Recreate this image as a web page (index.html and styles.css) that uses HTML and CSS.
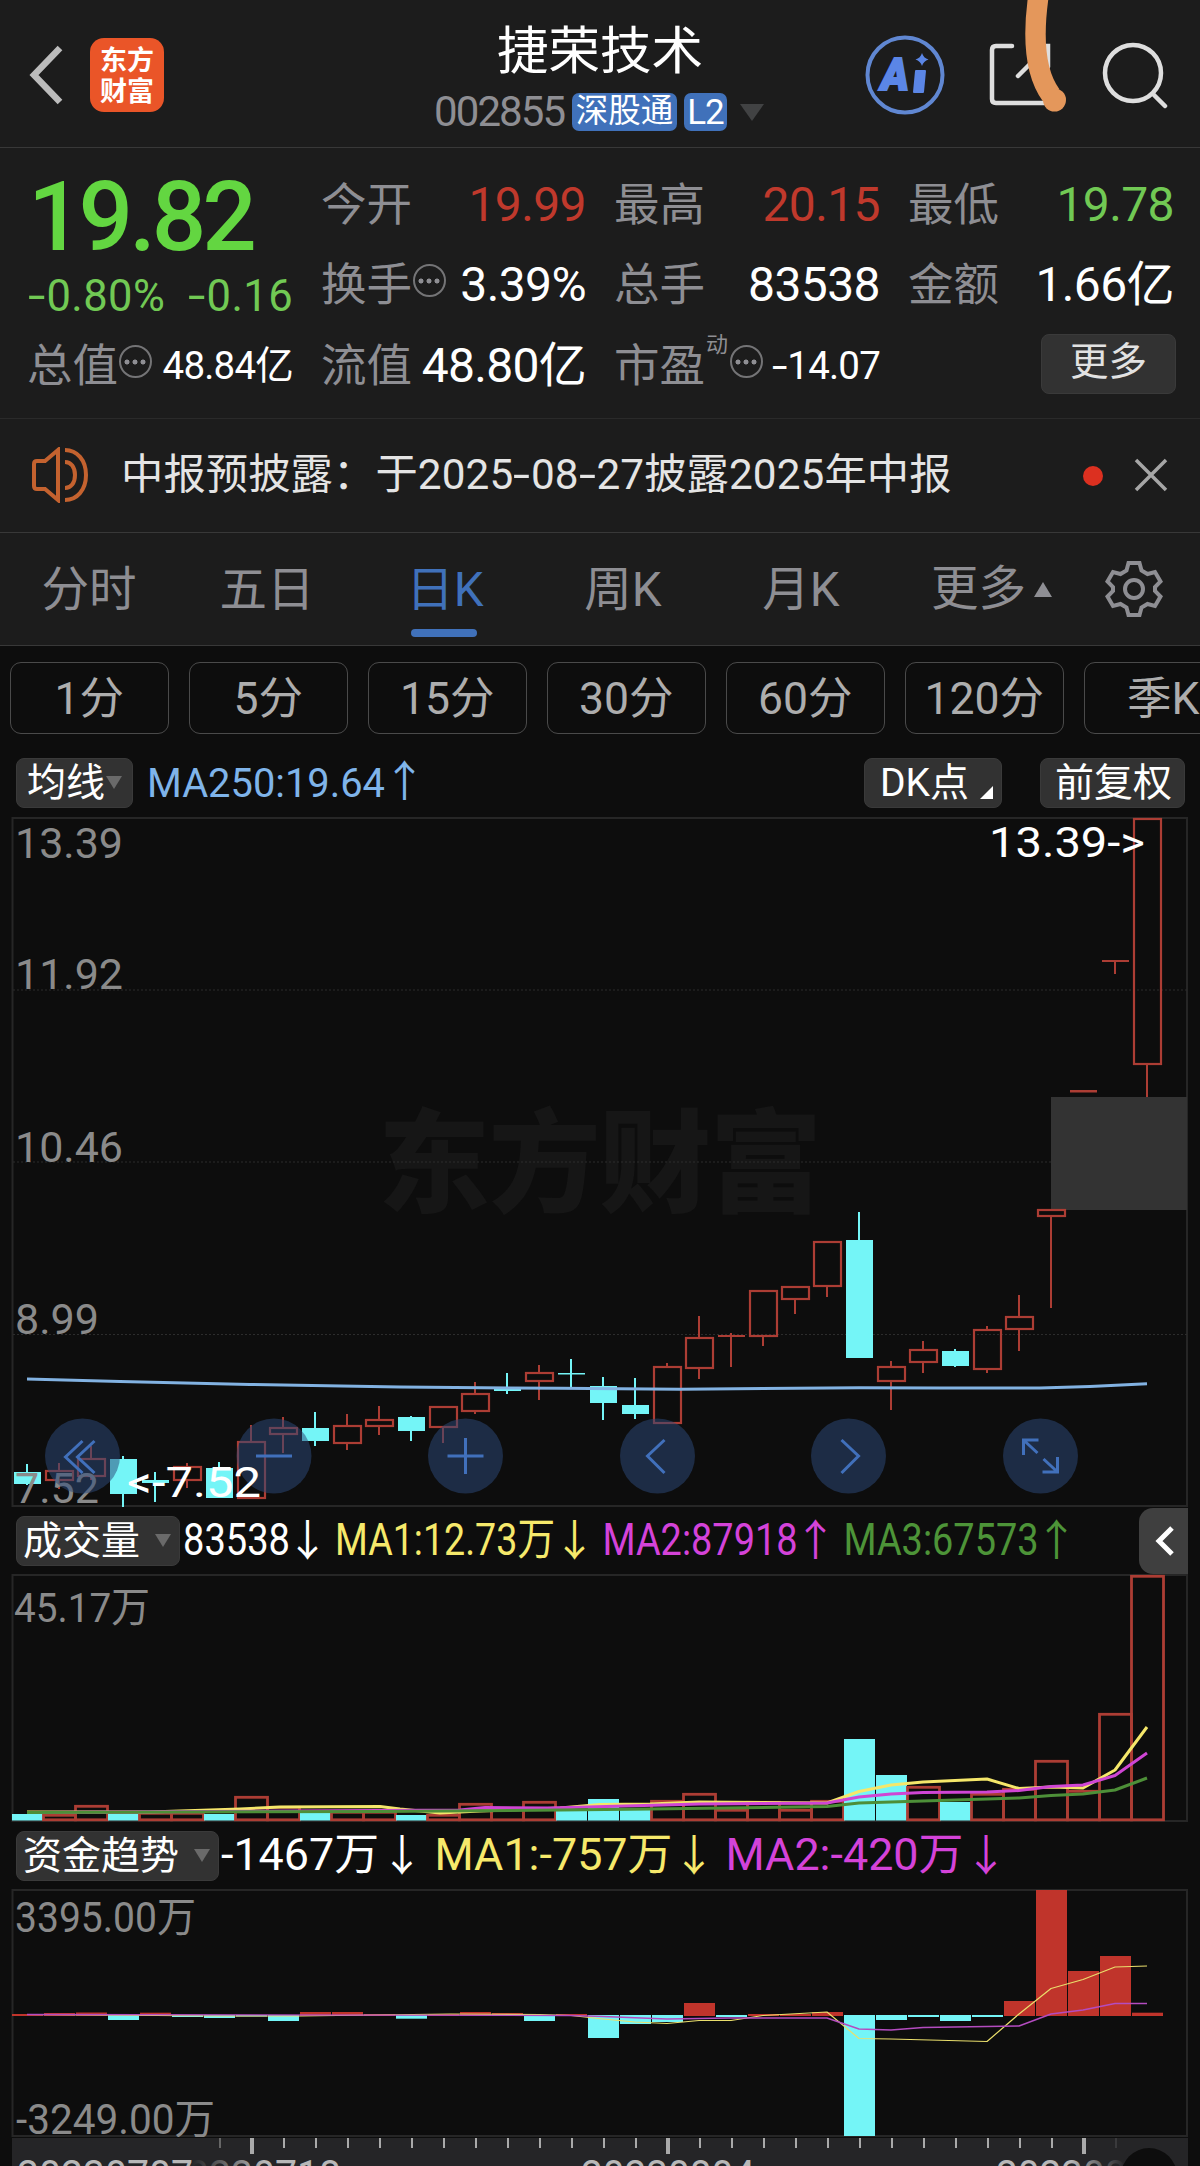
FILE: index.html
```html
<!DOCTYPE html>
<html lang="zh-CN">
<head>
<meta charset="utf-8">
<title>捷荣技术 002855</title>
<link rel="stylesheet" href="styles.css">
</head>
<body>
<div class="app">
  <header class="topbar">
    <div class="nav-left">
      <svg class="back" width="38" height="62" viewBox="0 0 38 62"><path d="M33 4 7 31l26 27" fill="none" stroke="#bcbcbc" stroke-width="6.5"/></svg>
      <div class="logo"><span>东方</span><span>财富</span></div>
    </div>
    <div class="stock">
      <h1>捷荣技术</h1>
      <div class="code-row">
        <span class="code">002855</span>
        <span class="tag">深股通</span>
        <span class="tag tag-l2">L2</span>
        <svg class="caret" width="24" height="17" viewBox="0 0 24 17"><path d="M0 0h24L12 17z" fill="#414243"/></svg>
      </div>
    </div>
    <div class="nav-right">
      <svg class="i-ai" width="82" height="82" viewBox="0 0 82 82">
        <circle cx="41" cy="41" r="37.5" fill="none" stroke="#6087d2" stroke-width="4"/>
        <text x="17" y="56" font-size="45" textLength="28" lengthAdjust="spacingAndGlyphs" class="ai">A</text>
        <path d="M52 37h9l-2 21h-9z" fill="#5b86e6" stroke="#5b86e6" stroke-width="2" stroke-linejoin="round"/>
        <path d="M58 19q1.500 5 6.500 6.500-5 1.500-6.500 6.500-1.500-5-6.500-6.500 5-1.500 6.500-6.500z" fill="#5b86e6"/>
      </svg>
      <svg class="i-share" width="66" height="66" viewBox="0 0 66 66" fill="none" stroke="#dedede" stroke-width="4.500" stroke-linecap="round"><path d="M24 4H8q-4 0-4 4v49q0 4 4 4h48q4 0 4-4V46M45 4h15v21M59 5 30 34"/></svg>
      <svg class="i-search" width="68" height="68" viewBox="0 0 68 68" fill="none" stroke="#dedede" stroke-width="4.500" stroke-linecap="round"><circle cx="32" cy="32" r="28"/><path d="m53 54 11 11"/></svg>
    </div>
    <svg class="marker" width="60" height="120" viewBox="1020 0 60 120"><path d="M1039-8c-5 33-7 77 12 103" fill="none" stroke="#e4975b" stroke-width="20.500"/><circle cx="1054.500" cy="100" r="11.500" fill="#e4975b"/></svg>
  </header>

  <section class="quote">
    <div class="last">
      <div class="price">19.82</div>
      <div class="change"><span><span class="hy">-</span>0.80%</span><span><span class="hy">-</span>0.16</span></div>
    </div>
    <div class="cell"><label>今开</label><b class="red">19.99</b></div>
    <div class="cell"><label>最高</label><b class="red">20.15</b></div>
    <div class="cell"><label>最低</label><b class="green">19.78</b></div>
    <div class="cell"><label>换手</label><i class="dots"></i><b>3.39%</b></div>
    <div class="cell"><label>总手</label><b>83538</b></div>
    <div class="cell"><label>金额</label><b>1.66亿</b></div>
    <div class="cell"><label>总值</label><i class="dots"></i><b class="small">48.84亿</b></div>
    <div class="cell"><label>流值</label><b class="mid">48.80亿</b></div>
    <div class="cell"><label>市盈</label><sup>动</sup><i class="dots"></i><b class="small"><span class="hy">-</span>14.07</b></div>
    <div class="cell cell-more"><button class="more">更多</button></div>
  </section>

  <section class="notice">
    <svg width="58" height="56" viewBox="0 0 58 56" fill="none" stroke="#c4622f" stroke-width="4"><path d="M27 3 14 14H6q-3 0-3 3v22q0 3 3 3h8l13 11zM34 3c12 0 21 10 21 25s-9 25-21 25M34 15c6 0 10 5 10 13s-4 13-10 13"/></svg>
    <p>中报预披露：于2025<span class="hy">-</span>08<span class="hy">-</span>27披露2025年中报</p>
    <i class="dot"></i>
    <svg width="34" height="34" viewBox="0 0 34 34"><path d="m2 2 30 30M32 2 2 32" stroke="#a6a6a6" stroke-width="3.500"/></svg>
  </section>

  <nav class="tabs">
    <a>分时</a><a>五日</a><a class="on">日K</a><a>周K</a><a>月K</a>
    <a class="tab-more">更多<svg width="18" height="15" viewBox="0 0 18 15"><path d="M9 0l9 15H0z" fill="#8e8e93"/></svg></a>
    <svg class="gear" width="58" height="58" viewBox="-29 -29 58 58" fill="none" stroke="#8e8e93" stroke-width="4"><path d="M-5.500-26h11l2 7.500 6 3.500 7.500-2 5.500 9.500-5.500 5.500v4l5.500 5.500-5.500 9.500-7.500-2-6 3.500-2 7.500h-11l-2-7.500-6-3.500-7.500 2-5.500-9.500 5.500-5.500v-4l-5.500-5.500 5.500-9.500 7.500 2 6-3.500z"/><circle r="9"/></svg>
  </nav>

  <div class="periods"><span>1分</span><span>5分</span><span>15分</span><span>30分</span><span>60分</span><span>120分</span><span>季K</span></div>

  <div class="indicator">
    <span class="chip chip-ma">均线<svg width="16" height="13" viewBox="0 0 16 13"><path d="M0 0h16L8 13z" fill="#6a6a6a"/></svg></span>
    <svg class="ma-text" width="280" height="50" viewBox="146 758 280 50"><text x="147" y="797" font-size="40" fill="#7fb4ea" textLength="238" lengthAdjust="spacingAndGlyphs">MA250:19.64</text><text class="arrow" x="404.500" y="797" fill="#7fb4ea">↑</text></svg>
    <span class="chip chip-dk">DK点<svg width="13" height="13" viewBox="0 0 13 13"><path d="M13 0v13H0z" fill="#fff"/></svg></span>
    <span class="chip chip-fq">前复权</span>
  </div>

  <svg id="price" class="plot" width="1200" height="690" viewBox="0 817 1200 690"></svg>

  <div class="legend">
    <span class="chip">成交量<svg width="16" height="13" viewBox="0 0 16 13"><path d="M0 0h16L8 13z" fill="#6a6a6a"/></svg></span>
    <svg class="legend-text" width="959" height="67" viewBox="180 1507 959 67">
      <g font-size="44.500">
        <text x="183" y="1555" fill="#fff" textLength="107" lengthAdjust="spacingAndGlyphs">83538</text><text class="arrow" x="307.500" y="1556" fill="#fff">↓</text>
        <text x="335" y="1555" fill="#f6e96b" textLength="220" lengthAdjust="spacingAndGlyphs">MA1:12.73万</text><text class="arrow" x="574.500" y="1556" fill="#f6e96b">↓</text>
        <text x="602.500" y="1555" fill="#d443d9" textLength="195" lengthAdjust="spacingAndGlyphs">MA2:87918</text><text class="arrow" x="815.500" y="1556" fill="#d443d9">↑</text>
        <text x="843.500" y="1555" fill="#4d9438" textLength="195" lengthAdjust="spacingAndGlyphs">MA3:67573</text><text class="arrow" x="1056.500" y="1556" fill="#4d9438">↑</text>
      </g>
    </svg>
    <span class="fold"><svg width="20" height="34" viewBox="0 0 20 34"><path d="M17 4 4 17l13 13" fill="none" stroke="#fff" stroke-width="5"/></svg></span>
  </div>

  <svg id="volume" class="plot" width="1200" height="248" viewBox="0 1574 1200 248"></svg>

  <div class="legend">
    <span class="chip chip-flow">资金趋势<svg width="16" height="13" viewBox="0 0 16 13"><path d="M0 0h16L8 13z" fill="#6a6a6a"/></svg></span>
    <svg class="legend-text" width="940" height="67" viewBox="219 1822 940 67">
      <g font-size="44.500">
        <text x="221" y="1869.500" fill="#fff" textLength="158" lengthAdjust="spacingAndGlyphs">-1467万</text><text class="arrow" x="402" y="1871" fill="#fff">↓</text>
        <text x="434.500" y="1869.500" fill="#f6e96b" textLength="238" lengthAdjust="spacingAndGlyphs">MA1:-757万</text><text class="arrow" x="694" y="1871" fill="#f6e96b">↓</text>
        <text x="725.500" y="1869.500" fill="#d443d9" textLength="238" lengthAdjust="spacingAndGlyphs">MA2:-420万</text><text class="arrow" x="986" y="1871" fill="#d443d9">↓</text>
      </g>
    </svg>
  </div>

  <svg id="flow" class="plot" width="1200" height="248" viewBox="0 1889 1200 248"></svg>
  <svg id="axis" class="plot" width="1200" height="29" viewBox="0 2137 1200 29"></svg>
</div>
<script src="charts.js"></script>
</body>
</html>
```

FILE: styles.css
```css
* { box-sizing: border-box; }
html, body { margin: 0; background: #0d0d0d; overflow: hidden; }
body, button {
  font-family: Roboto, "Noto Sans CJK SC", sans-serif;
  color: #fff;
}
svg { display: block; flex: none; }
svg text { font-family: Roboto, "Noto Sans CJK SC", sans-serif; }
.app { width: 1200px; height: 2166px; overflow: hidden; background: #0d0d0d; }

.topbar {
  position: relative;
  display: grid;
  grid-template-columns: 400px 400px 400px;
  height: 148px;
  background: #1c1c1c;
  border-bottom: 1px solid #383838;
}
.nav-left { display: flex; align-items: center; height: 150px; padding-left: 27px; gap: 25px; }
.logo {
  width: 74px; height: 74px; border-radius: 14px; background: #ea5528;
  display: flex; flex-direction: column; align-items: center; justify-content: center;
  padding-bottom: 3px;
  font: 700 27px/31px "Noto Sans CJK SC", sans-serif;
}
.stock { display: flex; flex-direction: column; align-items: center; }
h1 { margin: 17px 0 0; font: 400 51.5px/60px "Noto Sans CJK SC", sans-serif; white-space: nowrap; }
.code-row { display: flex; align-items: center; margin-top: 16px; height: 38px; margin-left: -2px; }
.code { font-size: 42px; line-height: 38px; letter-spacing: -1.9px; color: #8e8e93; width: 138px; }
.tag { height: 38px; width: 105px; margin-right: 7px; border-radius: 7px; background: #4071ba; font-size: 32.5px; line-height: 37px; text-align: center; white-space: nowrap; }
.tag-l2 { width: 43px; margin-right: 13px; font-size: 35px; letter-spacing: -1px; line-height: 40px; }
.nav-right { display: flex; align-items: center; height: 150px; padding-left: 64px; }
.ai { font-weight: 900; font-style: italic; fill: #5b86e6; stroke: #5b86e6; stroke-width: 2; }
.i-share { margin-left: 42px; }
.i-search { margin-left: 47px; }
.marker { position: absolute; left: 1020px; top: 0; }

/* widened minus sign */
.hy { display: inline-block; transform: scaleX(1.45); transform-origin: 0 50%; margin-right: .14em; }

.quote {
  display: grid;
  grid-template-columns: 265px 264px 265px 265px;
  grid-template-rows: 80px 81px 80px;
  column-gap: 29px;
  height: 271px;
  padding: 15px 0 0 28px;
  background: #1c1c1c;
  border-bottom: 1px solid #2a2a2a;
}
.last { grid-row: 1 / 3; }
.price { margin: 4px 0 0 0; font-weight: 500; font-size: 96px; line-height: 100px; letter-spacing: -4px; color: #63d641; }
.change { display: flex; justify-content: space-between; margin-top: 5px; font-size: 43.5px; line-height: 50px; letter-spacing: .4px; color: #71c954; }
.cell { display: flex; align-items: center; white-space: nowrap; height: 80px; }
.cell label { margin: 5px 0 0 -1px; font-size: 45.5px; line-height: 60px; color: #8e8e93; }
.cell b { margin: 3px 0 0 auto; font-weight: 400; font-size: 48px; line-height: 60px; letter-spacing: -.6px; }
.cell b.small { font-size: 38.500px; letter-spacing: -.8px; }
.cell b.mid { letter-spacing: -.7px; }
.cell b.red { color: #c0392c; }
.cell b.green { color: #71c954; }
.cell sup { align-self: flex-start; margin: 6px 1px 0 1px; font-size: 22px; line-height: 30px; color: #8e8e93; }
.dots {
  width: 33px; height: 33px; flex: none; margin: -5px 0 0 1px; border: 2.5px solid #747476; border-radius: 50%;
  background:
    radial-gradient(circle, #8e8e93 2.2px, transparent 2.8px) 2px center / 8px 8px repeat-x;
  background-clip: content-box; padding: 0 2px;
}
.cell-more { justify-content: flex-end; }
.more { width: 135px; height: 60px; margin-right: -2px; padding: 0 0 4px; border: 1px solid #3a3a3a; border-radius: 8px; background: #323232; color: #e2e2e2; font-size: 38.5px; line-height: 54px; }

.notice {
  display: flex; align-items: center; height: 114px; padding: 0 32px 2px 31px;
  background: #1c1c1c; border-bottom: 1px solid #383838; color: #e4e4e4;
}
.notice p { margin: 0 0 0 32px; width: 962px; font-size: 42.300px; line-height: 60px; letter-spacing: .1px; white-space: nowrap; }
.dot { width: 20px; height: 20px; border-radius: 50%; background: #dc3020; flex: none; margin: 2px 31px 0 0; }

.tabs { display: flex; align-items: center; height: 113px; background: #1c1c1c; border-bottom: 1px solid #383838; color: #8e8e93; }
.tabs a { position: relative; width: 178px; height: 112px; line-height: 114px; font-size: 47.5px; text-align: center; white-space: nowrap; }
.tabs .on { color: #4071ba; }
.tabs .on::after { content: ""; position: absolute; left: 55px; bottom: 8px; width: 66px; height: 8px; border-radius: 4px; background: #4071ba; }
.tabs .tab-more { display: flex; align-items: center; gap: 8px; padding-left: 41px; width: 215px; }

.periods { display: flex; gap: 20.500px; height: 89px; padding: 16px 0 0 10px; overflow: hidden; }
.periods span { flex: none; width: 158.5px; height: 72px; border: 1.500px solid #4a4a4a; border-radius: 11px; font-size: 44.500px; line-height: 73px; text-align: center; color: #adadad; }

.indicator { display: flex; align-items: flex-start; height: 82px; padding: 23px 0 0 16px; }
.chip {
  display: flex; align-items: center; height: 50px; padding: 0 10px 1px 6px; border: 1px solid #3a3a3a; border-radius: 8px;
  background: #323232; font-size: 39px; line-height: 48px; white-space: nowrap; flex: none;
}
.chip svg { margin-left: 15px; }
.chip-ma { width: 117px; padding-left: 10px; }
.chip-ma svg { margin-left: 1px; }
.ma-text { margin-left: 13px; }
.chip-dk { width: 138px; margin-left: 438px; padding-left: 15px; }
.chip-dk svg { margin: 19px 0 0 11px; }
.chip-fq { width: 145px; margin-left: 38px; padding-left: 14px; }
.arrow { font-family: "Noto Sans CJK SC", sans-serif; font-size: 43px; text-anchor: middle; }

.legend { display: flex; height: 67px; padding: 0 12px 0 16px; }
.legend .chip { margin-top: 9px; width: 164px; }
.legend .chip-flow { width: 203px; }
.fold { display: flex; align-items: center; width: 49px; height: 66px; margin-top: 1px; padding-left: 16px; border-radius: 14px 0 0 14px; background: #3f3f3f; }
.plot { overflow: hidden; }
.plot .y-label { fill: #8a8a8a; font-size: 43px; }
.watermark { font: 900 112px "Noto Sans CJK SC", sans-serif; fill: #161616; }
```

FILE: charts.js
```js
const NS = 'http://www.w3.org/2000/svg';
const RED = '#ac3d34', CYAN = '#74f5f7', YELLOW = '#f5e76a', PINK = '#cf45d4', GREEN = '#4d8f38', FRAME = '#262626';
const cx = i => 27 + 32 * i;

function add(host, tag, attrs, text) {
  const node = document.createElementNS(NS, tag);
  for (const key in attrs) node.setAttribute(key, attrs[key]);
  if (text) node.textContent = text;
  host.appendChild(node);
  return node;
}
function label(host, x, y, len, text, extra) {
  add(host, 'text', Object.assign({ x, y, textLength: len, lengthAdjust: 'spacingAndGlyphs', class: 'y-label' }, extra), text);
}
function line(host, pts, color, width) {
  add(host, 'polyline', { points: pts, fill: 'none', stroke: color, 'stroke-width': width, 'stroke-linejoin': 'round' });
}
function frame(host, top, bottom) {
  add(host, 'rect', { x: 12.5, y: top, width: 1174.5, height: bottom - top, fill: 'none', stroke: FRAME, 'stroke-width': 2 });
}

/* Price: direction, high, body top, body bottom, low */
const price = document.getElementById('price');
add(price, 'text', { x: 378, y: 1204, class: 'watermark', textLength: 444 }, '东方财富');
frame(price, 818, 1506);
[990, 1162, 1334.5].forEach(y => add(price, 'path', { d: `M13 ${y}H1187`, stroke: '#2c2c2c', 'stroke-width': 1.2, 'stroke-dasharray': '2 2' }));
add(price, 'rect', { x: 1051, y: 1097, width: 136, height: 113, fill: '#333' });
const candles = [
  ['d',1464,1472,1484,1485],['u',1463,1470,1481,1489],['u',1446,1458,1477,1480],['d',1456,1459,1494,1507],
  ['d',1472,1480,1483,1502],['u',1463,1466,1481,1488],['d',1462,1468,1498,1498],['u',1425,1441,1499,1499],
  ['u',1417,1427,1435,1453],['d',1412,1428,1441,1446],['u',1414,1425,1444,1450],['u',1406,1419,1427,1435],
  ['d',1416,1417,1431,1441],['u',1406,1406,1428,1443],['u',1382,1393,1412,1414],['d',1373,1389,1391,1394],
  ['u',1365,1372,1382,1400],['d',1359,1373,1374.5,1387],['d',1377,1386,1403,1420],['d',1378,1405,1414,1419],
  ['u',1363,1366,1424,1424],['u',1316,1337,1369,1379],['t',1333,1335,1337,1367],['u',1290,1290,1337,1346],
  ['u',1286,1286,1300,1314],['u',1241,1241,1287,1297],['d',1212,1240,1358,1358],['u',1361,1366,1382,1410],
  ['u',1341,1349,1363,1373],['d',1349,1351,1366,1367],['u',1326,1329,1370,1373],['u',1295,1316,1330,1351],
  ['u',1209,1209,1217,1308],['t',1090,1090,1092.5,1092],['t',960,960,962,974],['u',818,818,1065,1097]
];
candles.forEach(([dir, high, top, bottom, low], i) => {
  const x = cx(i), color = dir === 'd' ? CYAN : RED;
  if (dir === 'u') {
    add(price, 'path', { d: `M${x} ${high}V${top + 1}M${x} ${bottom - 1}V${low}`, stroke: color, 'stroke-width': 2 });
    add(price, 'rect', { x: x - 13, y: top + 1, width: 27, height: bottom - top - 2, fill: 'none', stroke: color, 'stroke-width': 2.2 });
  } else {
    add(price, 'path', { d: `M${x} ${high}V${low}`, stroke: color, 'stroke-width': 2 });
    add(price, 'rect', { x: x - 13, y: top, width: 27, height: bottom - top, fill: color });
  }
});
line(price, '27,1379 120,1381.5 250,1384.5 400,1387 560,1388.3 680,1389.3 859,1387.8 940,1388 1040,1388 1090,1386.5 1147,1383.8', '#82b2e2', 3);
const icons = [
  [82.5, 'M0-15-17 1 0 17M12-15-5 1 12 17'], [274, 'M-18 0H18'], [465.5, 'M-18 0H18M0-18V18'],
  [657.5, 'M7-16-10 0 7 17'], [848.5, 'M-7-16 10 0-7 17'], [1040.5, 'M-3-3-17-16M-17-1V-16H-2M3 3 17 16M17 1V16H2']
];
label(price, 15, 1502.5, 84, '7.52');
icons.forEach(([x, d]) => {
  const g = add(price, 'g', { transform: `translate(${x} 1456)` });
  add(g, 'circle', { r: 37.5, fill: 'rgba(45,72,120,.52)' });
  add(g, 'path', { d, fill: 'none', stroke: '#4170bb', 'stroke-width': 3 });
});
label(price, 15, 858, 108, '13.39');
label(price, 15, 989, 108, '11.92');
label(price, 15, 1162, 108, '10.46');
label(price, 15, 1334, 84, '8.99');
label(price, 989, 857, 156, '13.39->', { style: 'fill:#fff' });
label(price, 127, 1497, 134, '<-7.52', { style: 'fill:#fff' });

/* Volume: direction and bar top */
const volume = document.getElementById('volume');
frame(volume, 1575, 1821);
const bars = 'd1814 u1814 u1805 d1814 u1812 u1812 d1814 u1796 u1806 d1812 u1811 u1811 d1815 u1814 u1803 u1807 u1801 d1811 d1799 d1810 u1800 u1793 u1809 u1801 u1809 u1800 d1739 d1775 u1786 d1802 u1793 u1788 u1760 u1790 u1713 u1575'.split(' ');
bars.forEach((bar, i) => {
  const top = +bar.slice(1), x = cx(i);
  if (bar[0] === 'd') add(volume, 'rect', { x: x - 15, y: top, width: 31, height: 1820.5 - top, fill: CYAN });
  else add(volume, 'rect', { x: x - 15.5, y: top + 1.3, width: 32, height: 1818.5 - top, fill: 'none', stroke: RED, 'stroke-width': 2.8 });
});
line(volume, '27,1812 150,1812 240,1809 280,1807 380,1806.5 400,1809 440,1813 480,1811 560,1808 600,1804.5 650,1804 699,1802 827,1803 859,1791.5 891,1785 923,1782 987,1779 1019,1788.5 1051,1787 1083,1788 1115,1770 1147,1727', YELLOW, 3);
line(volume, '27,1812.5 460,1810 485,1807.5 550,1808 700,1804 827,1803 859,1797 891,1794 923,1792.5 987,1792 1019,1790.5 1051,1786.5 1083,1785 1115,1775.5 1147,1753', PINK, 3);
line(volume, '27,1812.5 380,1811.5 560,1810 650,1809 827,1806.5 859,1803 923,1801 987,1799 1019,1798 1051,1795.5 1083,1794 1115,1790 1147,1778', GREEN, 3);
label(volume, 14, 1622, 136, '45.17万', { style: 'font-size:41px' });

/* Net capital flow: end of each bar measured from the zero line */
const flow = document.getElementById('flow');
frame(flow, 1890, 2136);
const ends = [2014, 2013, 2012.5, 2020, 2012.7, 2017, 2018, 2016.5, 2021, 2012, 2012, 2014, 2018.7, 2014, 2012, 2013, 2021, 2014, 2038, 2024, 2022, 2003, 2017, 2014, 2014, 2012, 2136, 2020, 2017, 2021, 2017, 2001, 1890, 1971, 1956, 2012.7];
ends.forEach((end, i) => {
  const up = end < 2015.5, from = up ? 2016 : 2015;
  add(flow, 'rect', { x: cx(i) - 15, y: Math.min(end, from), width: 31, height: Math.abs(end - from), fill: up ? '#c0342b' : CYAN });
});
line(flow, '27,2014.5 220,2016 300,2016 450,2014 540,2014.5 571,2015.5 603,2019 635,2022 667,2023.5 699,2020.5 731,2020.5 763,2015.5 827,2012 859,2038.500 891,2039 987,2041.5 1019,2014 1051,1988.5 1083,1979.5 1115,1967 1147,1966', '#eadf6c', 1.2);
line(flow, '27,2014.5 571,2015.5 603,2016.5 667,2019 730,2018 827,2018 859,2029 891,2030 923,2027.5 1019,2026 1051,2014 1083,2010 1115,2003.5 1147,2003.500', '#b44cc0', 1.4);
label(flow, 15, 1931.5, 181, '3395.00万', { style: 'font-size:42px' });
label(flow, 16, 2133.5, 199, '-3249.00万', { style: 'font-size:42px' });

/* Date axis */
const axis = document.getElementById('axis');
add(axis, 'rect', { x: 12, y: 2138, width: 1176, height: 28, fill: '#252527' });
for (let x = 220, i = 0; x < 1120; x += 32, i++) {
  const major = i % 13 === 1;
  add(axis, 'rect', { x: x - (major ? 2 : 1), y: 2138, width: major ? 4 : 2, height: major ? 16 : 10, fill: i === 0 ? '#666' : i === 28 ? '#3a3a3c' : '#aaa' });
}
const defs = add(axis, 'defs', {});
const fade = add(defs, 'linearGradient', { id: 'fade', gradientUnits: 'userSpaceOnUse', x1: 192, x2: 265, y1: 0, y2: 0 });
add(fade, 'stop', { offset: 0, 'stop-color': '#252527' });
add(fade, 'stop', { offset: 1, 'stop-color': '#b8b8b8' });
const fadeOut = add(defs, 'linearGradient', { id: 'fade-out', gradientUnits: 'userSpaceOnUse', x1: 1070, x2: 1125, y1: 0, y2: 0 });
add(fadeOut, 'stop', { offset: 0, 'stop-color': '#b8b8b8' });
add(fadeOut, 'stop', { offset: 1, 'stop-color': '#252527' });
label(axis, 165, 2190, 176, '20230718', { style: 'fill:url(#fade)' });
label(axis, 17, 2190, 176, '20230707', { style: 'fill:#b8b8b8' });
label(axis, 581, 2190, 174, '20230804', { style: 'fill:#b8b8b8' });
label(axis, 996, 2190, 174, '20230823', { style: 'fill:url(#fade-out)' });
add(axis, 'circle', { cx: 1149, cy: 2176, r: 28, fill: '#0d0d0d' });
```
